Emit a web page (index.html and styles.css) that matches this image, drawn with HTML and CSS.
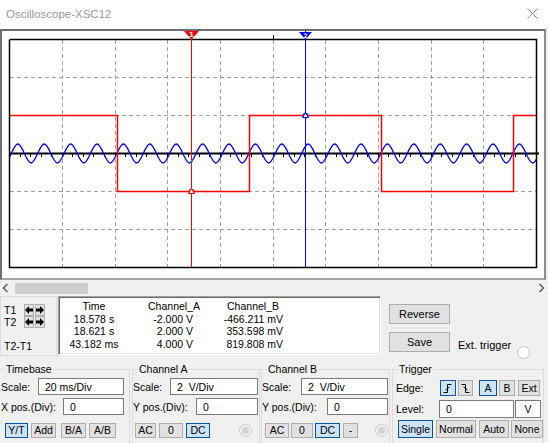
FILE: index.html
```html
<!DOCTYPE html>
<html>
<head>
<meta charset="utf-8">
<title>Oscilloscope-XSC12</title>
<link rel="stylesheet" href="styles.css">
</head>
<body>
<div class="window">
  <header class="titlebar">
    <span class="title">Oscilloscope-XSC12</span>
    <svg class="close" width="11" height="11" viewBox="0 0 11 11"><path d="M0.5 0.5L10.5 10.5M10.5 0.5L0.5 10.5" stroke="#8a8a8a" stroke-width="1"/></svg>
  </header>

  <div class="screen">
    <svg class="plot" width="542" height="247" viewBox="2 31 542 247">
      <defs>
        <clipPath id="area"><rect x="9.5" y="39.5" width="527" height="228"/></clipPath>
      </defs>
      <g stroke="#a0a0a0" stroke-width="1" stroke-dasharray="4 3" fill="none">
        <path d="M62.5 40V267M115.5 40V267M167.5 40V267M220.5 40V267M273.5 40V267M325.5 40V267M378.5 40V267M431.5 40V267M483.5 40V267"/>
        <path d="M10 77.5H536M10 115.5H536M10 191.5H536M10 229.5H536"/>
      </g>
      <path d="M273.5 35V40" stroke="#000" stroke-width="1"/>
      <path d="M10 153.5H539" stroke="#000" stroke-width="2"/>
      <path stroke="#000" stroke-width="1" d="M9.5 154v3M20.5 154v3M30.5 154v3M41.5 154v3M51.5 154v3M62.5 154v3M72.5 154v3M83.5 154v3M93.5 154v3M104.5 154v3M115.5 154v3M125.5 154v3M136.5 154v3M146.5 154v3M157.5 154v3M167.5 154v3M178.5 154v3M188.5 154v3M199.5 154v3M209.5 154v3M220.5 154v3M230.5 154v3M241.5 154v3M251.5 154v3M262.5 154v3M273.5 154v3M283.5 154v3M294.5 154v3M304.5 154v3M315.5 154v3M325.5 154v3M336.5 154v3M346.5 154v3M357.5 154v3M367.5 154v3M378.5 154v3M388.5 154v3M399.5 154v3M410.5 154v3M420.5 154v3M431.5 154v3M441.5 154v3M452.5 154v3M462.5 154v3M473.5 154v3M483.5 154v3M494.5 154v3M504.5 154v3M515.5 154v3M525.5 154v3M536.5 154v3"/>
      <g clip-path="url(#area)" fill="none">
        <path stroke="#0000ff" stroke-width="1.3" d="M-15.16 153.5c5.6 -12.67 7.6 -12.67 13.2 0s7.6 12.67 13.2 0s7.6 -12.67 13.2 0s7.6 12.67 13.2 0s7.6 -12.67 13.2 0s7.6 12.67 13.2 0s7.6 -12.67 13.2 0s7.6 12.67 13.2 0s7.6 -12.67 13.2 0s7.6 12.67 13.2 0s7.6 -12.67 13.2 0s7.6 12.67 13.2 0s7.6 -12.67 13.2 0s7.6 12.67 13.2 0s7.6 -12.67 13.2 0s7.6 12.67 13.2 0s7.6 -12.67 13.2 0s7.6 12.67 13.2 0s7.6 -12.67 13.2 0s7.6 12.67 13.2 0s7.6 -12.67 13.2 0s7.6 12.67 13.2 0s7.6 -12.67 13.2 0s7.6 12.67 13.2 0s7.6 -12.67 13.2 0s7.6 12.67 13.2 0s7.6 -12.67 13.2 0s7.6 12.67 13.2 0s7.6 -12.67 13.2 0s7.6 12.67 13.2 0s7.6 -12.67 13.2 0s7.6 12.67 13.2 0s7.6 -12.67 13.2 0s7.6 12.67 13.2 0s7.6 -12.67 13.2 0s7.6 12.67 13.2 0s7.6 -12.67 13.2 0s7.6 12.67 13.2 0s7.6 -12.67 13.2 0s7.6 12.67 13.2 0s7.6 -12.67 13.2 0s7.6 12.67 13.2 0"/>
        <path stroke="#ff0000" stroke-width="1.5" d="M9 115.5H117.5V191.5H249.5V115.5H381.5V191.5H513.5V115.5H537"/>
      </g>
      <path d="M10 39.5H536.5V267.5H9.5V39.5" stroke="#000" stroke-width="1.5" fill="none"/>
      <path d="M191.5 30V267" stroke="#ff0000" stroke-width="1"/>
      <path d="M305.5 31V267" stroke="#0000ff" stroke-width="1"/>
      <polygon points="183,30 200,30 191.5,39.5" fill="#ff0000"/>
      <text x="191.5" y="37" class="mk">1</text>
      <polygon points="299,32 312,32 305.5,39.5" fill="#0000ff"/>
      <text x="305.5" y="37.5" class="mk small">2</text>
      <path d="M188.5 193.5L191.5 188.5L194.5 193.5Z" fill="#fff" stroke="#ff0000" stroke-width="1"/>
      <circle cx="191.5" cy="191.5" r="2.5" fill="none" stroke="#ff0000" stroke-width="1"/>
      <path d="M302.5 117.5L305.5 112.5L308.5 117.5Z" fill="#fff" stroke="#0000ff" stroke-width="1"/>
      <circle cx="305.5" cy="115.5" r="2.5" fill="none" stroke="#0000ff" stroke-width="1"/>
      <circle cx="191.5" cy="161.5" r="1.2" fill="#2a9d6a"/>
    </svg>
  </div>

  <div class="scrollbar">
    <svg class="sarrow" width="8" height="10" viewBox="0 0 8 10"><path d="M5.5 1L1.5 5L5.5 9" stroke="#606060" stroke-width="1.6" fill="none"/></svg>
    <div class="track"><div class="thumb"></div></div>
    <svg class="sarrow" width="8" height="10" viewBox="0 0 8 10"><path d="M2.5 1L6.5 5L2.5 9" stroke="#606060" stroke-width="1.6" fill="none"/></svg>
  </div>

  <div class="readout">
    <div class="tbox">
      <div class="trow">
        <span class="tlabel">T1</span>
        <span class="abtn"><svg width="8" height="8" viewBox="0 0 8 8"><path d="M0 4L4 0V2.5H8V5.5H4V8Z" fill="#000"/></svg></span>
        <span class="abtn"><svg width="8" height="8" viewBox="0 0 8 8"><path d="M8 4L4 0V2.5H0V5.5H4V8Z" fill="#000"/></svg></span>
      </div>
      <div class="trow">
        <span class="tlabel">T2</span>
        <span class="abtn"><svg width="8" height="8" viewBox="0 0 8 8"><path d="M0 4L4 0V2.5H8V5.5H4V8Z" fill="#000"/></svg></span>
        <span class="abtn"><svg width="8" height="8" viewBox="0 0 8 8"><path d="M8 4L4 0V2.5H0V5.5H4V8Z" fill="#000"/></svg></span>
      </div>
      <div class="tdiff">T2-T1</div>
    </div>
    <div class="table">
      <div class="c1 hd">Time</div><div class="c2 hd">Channel_A</div><div class="c3 hd">Channel_B</div>
      <div class="c1">18.578 s</div><div class="c2">-2.000 V</div><div class="c3">-466.211 mV</div>
      <div class="c1">18.621 s</div><div class="c2">2.000 V</div><div class="c3">353.598 mV</div>
      <div class="c1">43.182 ms</div><div class="c2">4.000 V</div><div class="c3">819.808 mV</div>
    </div>
    <div class="side">
      <button class="btn big">Reverse</button>
      <div class="saverow">
        <button class="btn big">Save</button>
        <span class="ext">Ext. trigger</span>
        <span class="radio"></span>
      </div>
    </div>
  </div>

  <div class="groups">
    <fieldset class="group g-time">
      <legend>Timebase</legend>
      <div class="row r1"><span class="lbl">Scale:</span><span class="input w86">20 ms/Div</span></div>
      <div class="row r2"><span class="lbl">X pos.(Div):</span><span class="input w61">0</span></div>
      <div class="row r3">
        <button class="btn sel w23">Y/T</button>
        <button class="btn w25 ml3">Add</button>
        <button class="btn w25 ml5">B/A</button>
        <button class="btn w27 ml3">A/B</button>
      </div>
    </fieldset>
    <fieldset class="group g-cha">
      <legend>Channel A</legend>
      <div class="row r1"><span class="lbl">Scale:</span><span class="input w88">2&nbsp; V/Div</span></div>
      <div class="row r2"><span class="lbl">Y pos.(Div):</span><span class="input w62">0</span></div>
      <div class="row r3">
        <button class="btn w21">AC</button>
        <button class="btn w24 ml3">0</button>
        <button class="btn sel w24 ml3">DC</button>
        <span class="radio dis"></span>
      </div>
    </fieldset>
    <fieldset class="group g-chb">
      <legend>Channel B</legend>
      <div class="row r1"><span class="lbl">Scale:</span><span class="input w87">2&nbsp; V/Div</span></div>
      <div class="row r2"><span class="lbl">Y pos.(Div):</span><span class="input w61">0</span></div>
      <div class="row r3">
        <button class="btn w24">AC</button>
        <button class="btn w22 ml2">0</button>
        <button class="btn sel w25 ml2">DC</button>
        <button class="btn w15 ml3">-</button>
        <span class="radio dis"></span>
      </div>
    </fieldset>
    <fieldset class="group g-trig">
      <legend>Trigger</legend>
      <div class="row t1">
        <span class="lbl">Edge:</span>
        <button class="btn sel w16 ico"><svg width="10" height="11" viewBox="0 0 10 11"><path d="M0.5 9.5H4.5V1.5H8.5M2.5 7L6.5 4" stroke="#000" stroke-width="1" fill="none"/></svg></button>
        <button class="btn w15 ml2 ico"><svg width="10" height="11" viewBox="0 0 10 11"><path d="M0.5 1.5H4.5V9.5H8.5M2.5 4L6.5 7" stroke="#000" stroke-width="1" fill="none"/></svg></button>
        <button class="btn sel w18 ml6">A</button>
        <button class="btn w16 ml2">B</button>
        <button class="btn w22 ml3">Ext</button>
      </div>
      <div class="row t2">
        <span class="lbl">Level:</span>
        <span class="input w75">0</span>
        <span class="input unit">V</span>
      </div>
      <div class="row t3">
        <button class="btn sel w35">Single</button>
        <button class="btn w40 ml3">Normal</button>
        <button class="btn w30 ml3">Auto</button>
        <button class="btn w32 ml2">None</button>
      </div>
    </fieldset>
  </div>
</div>
</body>
</html>
```

FILE: styles.css
```css
* { box-sizing: border-box; }
body {
  margin: 0;
  background: #f0f0f0;
  font-family: "Liberation Sans", Arial, sans-serif;
  font-size: 10.5px;
  color: #000;
}
.window {
  width: 548px;
  height: 443px;
  overflow: hidden;
  background: #f0f0f0;
}
.titlebar {
  height: 29px;
  background: #fff;
  display: flex;
  align-items: center;
  justify-content: space-between;
  padding: 0 10px 2px 6px;
}
.title {
  font-size: 11.5px;
  color: #999;
}
.close { display: block; }

.screen {
  width: 546px;
  height: 251px;
  background: #fff;
  border-style: solid;
  border-width: 2px;
  border-color: #6e6e6e #8c8c8c #a5a5a5 #6e6e6e;
}
.plot { display: block; }
.mk {
  fill: #fff;
  font-family: "DejaVu Sans", sans-serif;
  font-weight: bold;
  font-size: 7px;
  text-anchor: middle;
}
.mk.small { font-size: 6px; }

.scrollbar {
  height: 16px;
  display: flex;
  align-items: center;
  padding: 0 3px 0 2px;
}
.sarrow { display: block; }
.track { flex: 1; height: 11px; padding-left: 5px; }
.thumb { width: 73px; height: 11px; background: #cdcdcd; }

.readout {
  display: flex;
  height: 61px;
}
.tbox {
  width: 58px;
  height: 60px;
  flex: none;
  border: 1px solid #dadada;
  border-right: 2px solid #e3e3e3;
  padding: 7px 0 0 3px;
}
.trow {
  display: flex;
  align-items: center;
  height: 12px;
}
.tlabel { width: 20px; flex: none; }
.abtn {
  flex: none;
  width: 10px;
  height: 12px;
  margin-right: 1px;
  background: #e1e1e1;
  border: 1px solid #adadad;
  display: flex;
  align-items: center;
  justify-content: center;
}
.abtn svg { display: block; flex: none; }
.tdiff { margin-top: 12px; }

.table {
  flex: none;
  width: 323px;
  height: 59px;
  background: #fff;
  border: 1px solid;
  border-color: #a0a0a0 #fff #fff #a0a0a0;
  box-shadow: inset 1px 1px 0 #696969, inset -1px -1px 0 #e3e3e3;
  display: grid;
  grid-template-columns: 64px 74px 83px;
  grid-auto-rows: 12.6px;
  padding: 3px 0 0 3px;
  line-height: 12.6px;
}
.c1 { text-align: center; }
.c2 { text-align: right; padding-right: 7px; }
.c3 { text-align: right; }
.c2.hd { padding-right: 0; }
.c3.hd { padding-right: 4px; }

.side {
  margin-left: 8px;
  padding-top: 8px;
}
.btn {
  font: inherit;
  color: #000;
  background: #e1e1e1;
  border: 1px solid #adadad;
  padding: 0;
  margin: 0;
  height: 15px;
  display: flex;
  align-items: center;
  justify-content: center;
  line-height: 1;
}
.btn.sel {
  background: #cce4f7;
  border-color: #005499;
}
.btn.big { width: 61px; height: 20px; font-size: 11px; }
.saverow {
  display: flex;
  align-items: flex-end;
  margin-top: 8px;
}
.ext { margin-left: 8px; font-size: 11px; line-height: 13px; }
.radio {
  width: 13px;
  height: 13px;
  border-radius: 50%;
  background: #fff;
  border: 1px solid #c4c4c4;
  margin-left: 6px;
  margin-bottom: -7px;
}

.groups {
  display: flex;
  margin-top: 6px;
}
.group {
  margin: 0;
  padding: 0;
  border: 1px solid #dcdcdc;
  height: 81px;
  min-width: 0;
}
.group legend {
  padding: 0 1px;
  margin-left: 5px;
  line-height: 13px;
}
.g-time { width: 130px; border-left: none; }
.g-cha { width: 128px; margin-left: 2px; }
.g-chb { width: 129px; margin-left: 1px; }
.g-trig { width: 152px; margin-left: 2px; }

.row { display: flex; align-items: center; }
.lbl { white-space: nowrap; }
.r1 { margin-top: 2px; height: 17px; justify-content: space-between; padding-right: 5px; }
.r2 { margin-top: 3px; height: 17px; justify-content: space-between; padding-right: 5px; }
.r3 { margin-top: 8px; height: 15px; padding-left: 5px; }
.g-time .r1, .g-time .r2 { padding-left: 1px; }
.g-cha .r1, .g-cha .r2 { padding-right: 1px; }
.g-cha .r3 { padding-left: 2px; }
.g-chb .r1, .g-chb .r2 { padding-right: 1px; padding-left: 0; }
.g-chb .r3 { padding-left: 3px; }

.input {
  height: 17px;
  background: #fff;
  border: 1px solid #7a7a7a;
  padding-left: 6px;
  display: flex;
  align-items: center;
}
.w86 { width: 86px; }
.w87 { width: 87px; }
.w88 { width: 88px; }
.w61 { width: 61px; }
.w62 { width: 62px; }
.w75 { width: 75px; }
.w15 { width: 15px; }
.w16 { width: 16px; }
.w18 { width: 18px; }
.w21 { width: 21px; }
.w22 { width: 22px; }
.w23 { width: 23px; }
.w24 { width: 24px; }
.w25 { width: 25px; }
.w27 { width: 27px; }
.w30 { width: 30px; }
.w32 { width: 32px; }
.w35 { width: 35px; }
.w40 { width: 40px; }
.ml2 { margin-left: 2px; }
.ml3 { margin-left: 3px; }
.ml5 { margin-left: 5px; }
.ml6 { margin-left: 6px; }

.radio.dis {
  background: #f0f0f0;
  border-color: #cccccc;
  margin-left: auto;
  margin-right: 7px;
  margin-bottom: 0;
  display: flex;
  align-items: center;
  justify-content: center;
}
.radio.dis::after {
  content: "";
  width: 7px;
  height: 7px;
  border-radius: 50%;
  background: #d4d4d4;
}
.g-chb .radio.dis { margin-right: 1px; }

.t1 { margin-top: 4px; height: 16px; padding-left: 3px; }
.t1 .lbl { width: 44px; }
.t1 .btn { height: 16px; }
.ico svg { display: block; }
.t2 { margin-top: 4px; height: 18px; padding-left: 3px; }
.t2 .lbl { width: 43px; }
.t2 .input { height: 18px; }
.unit { width: 26px; padding-left: 0; justify-content: center; margin-left: 1px; }
.t3 { margin-top: 2px; height: 18px; padding-left: 5px; }
.t3 .btn { height: 18px; }
```
